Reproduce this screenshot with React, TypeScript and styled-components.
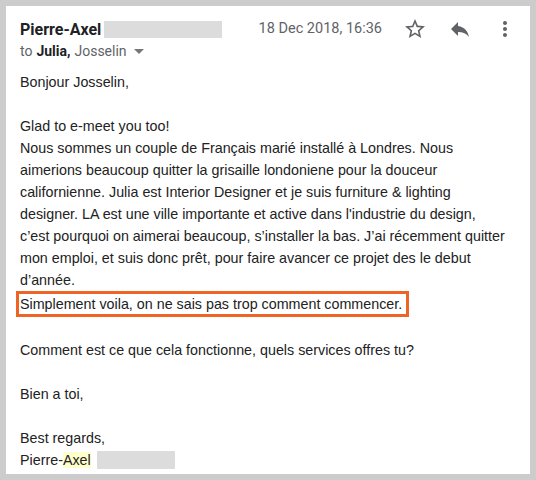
import React from "react";
import styled, { createGlobalStyle } from "styled-components";

const Global = createGlobalStyle`
  html, body {
    margin: 0;
    padding: 0;
    background: #cccccc;
  }
`;

const Frame = styled.div`
  width: 536px;
  height: 480px;
  padding: 6px;
  box-sizing: border-box;
  background: #cccccc;
`;

const Panel = styled.div`
  height: 100%;
  background: #ffffff;
  padding: 12px 13px 0 14px;
  box-sizing: border-box;
  overflow: hidden;
`;

const Header = styled.div`
  display: flex;
  align-items: flex-start;
`;

const Sender = styled.div`
  flex: 1;
  display: flex;
  flex-direction: column;
  font-family: Roboto, "Liberation Sans", sans-serif;
`;

const NameRow = styled.div`
  display: flex;
  align-items: center;
  height: 22px;
`;

const Name = styled.span`
  font-weight: bold;
  font-size: 16px;
  color: #202124;
`;

const Redacted = styled.span<{ $w: number; $h: number }>`
  display: inline-block;
  width: ${(p) => p.$w}px;
  height: ${(p) => p.$h}px;
  background: #dcdcdc;
  margin-left: 3px;
  vertical-align: middle;
`;

const ToRow = styled.div`
  display: flex;
  align-items: center;
  height: 20px;
  margin-top: 1px;
  font-size: 14px;
  color: #5f6368;
`;

const Strong = styled.b`
  color: #202124;
  margin: 0 4px;
`;

const Caret = styled.span`
  width: 0;
  height: 0;
  margin-left: 7px;
  border-left: 5px solid transparent;
  border-right: 5px solid transparent;
  border-top: 5px solid #777;
`;

const Date = styled.span`
  font-family: Roboto, "Liberation Sans", sans-serif;
  font-size: 14.5px;
  color: #5f6368;
  line-height: 22px;
  margin-right: 21px;
`;

const IconButton = styled.span`
  width: 24px;
  height: 24px;
  display: flex;
  align-items: center;
  justify-content: center;
  margin-left: 21px;
  &:first-of-type {
    margin-left: 0;
  }
  svg {
    fill: #5f6368;
  }
`;

const Icons = styled.div`
  display: flex;
  align-items: center;
  margin-top: -1px;
`;

const Body = styled.div`
  margin-top: 10px;
  font-family: "Liberation Sans", Arial, sans-serif;
  font-size: 14.3px;
  line-height: 22px;
  color: #222222;
`;

const Para = styled.p`
  margin: 0 0 22px;
`;

const Line = styled.span`
  display: block;
  white-space: nowrap;
`;

const Boxed = styled.span`
  display: inline-block;
  margin-left: -4px;
  padding: 0 4px 0 1px;
  line-height: 20px;
  border: 3px solid #ee6326;
  box-sizing: border-box;
`;

const Mark = styled.span`
  background: #ffffcc;
`;

const Sign = styled.span`
  display: inline-block;
  width: 78px;
  height: 18px;
  background: #dcdcdc;
  vertical-align: -4px;
  margin-left: 6px;
`;

const introLines = [
  "Glad to e-meet you too!",
  "Nous sommes un couple de Français marié installé à Londres. Nous",
  "aimerions beaucoup quitter la grisaille londoniene pour la douceur",
  "californienne. Julia est Interior Designer et je suis furniture & lighting",
  "designer. LA est une ville importante et active dans l'industrie du design,",
  "c’est pourquoi on aimerai beaucoup, s’installer la bas. J’ai récemment quitter",
  "mon emploi, et suis donc prêt, pour faire avancer ce projet des le debut",
  "d’année.",
];

export default function App() {
  return (
    <Frame>
      <Global />
      <Panel>
        <Header>
          <Sender>
            <NameRow>
              <Name>Pierre-Axel</Name>
              <Redacted $w={118} $h={17} />
            </NameRow>
            <ToRow>
              to<Strong>Julia,</Strong>Josselin
              <Caret />
            </ToRow>
          </Sender>
          <Date>18 Dec 2018, 16:36</Date>
          <Icons>
            <IconButton>
              <svg width="24" height="24" viewBox="0 0 24 24">
                <path d="M22 9.24l-7.19-.62L12 2 9.19 8.63 2 9.24l5.46 4.73L5.82 21 12 17.27 18.18 21l-1.63-7.03L22 9.24zM12 15.4l-3.760 2.27 1-4.28-3.32-2.88 4.38-.38L12 6.1l1.71 4.04 4.38.38-3.32 2.88 1 4.28L12 15.4z" />
              </svg>
            </IconButton>
            <IconButton>
              <svg width="24" height="24" viewBox="0 0 24 24">
                <path d="M10 9V5l-7 7 7 7v-4.1c5 0 8.5 1.6 11 5.1-1-5-4-10-11-11z" />
              </svg>
            </IconButton>
            <IconButton>
              <svg width="24" height="24" viewBox="0 0 24 24">
                <path d="M12 8c1.1 0 2-.9 2-2s-.9-2-2-2-2 .9-2 2 .9 2 2 2zm0 2c-1.1 0-2 .9-2 2s.9 2 2 2 2-.9 2-2-.9-2-2-2zm0 6c-1.1 0-2 .9-2 2s.9 2 2 2 2-.9 2-2-.9-2-2-2z" />
              </svg>
            </IconButton>
          </Icons>
        </Header>
        <Body>
          <Para>Bonjour Josselin,</Para>
          <Para>
            {introLines.map((l, i) => (
              <Line key={i}>{l}</Line>
            ))}
            <Boxed>Simplement voila, on ne sais pas trop comment commencer.</Boxed>
          </Para>
          <Para>Comment est ce que cela fonctionne, quels services offres tu?</Para>
          <Para>Bien a toi,</Para>
          <Para>
            Best regards,
            <br />
            Pierre-<Mark>Axel</Mark>
            <Sign />
          </Para>
        </Body>
      </Panel>
    </Frame>
  );
}
